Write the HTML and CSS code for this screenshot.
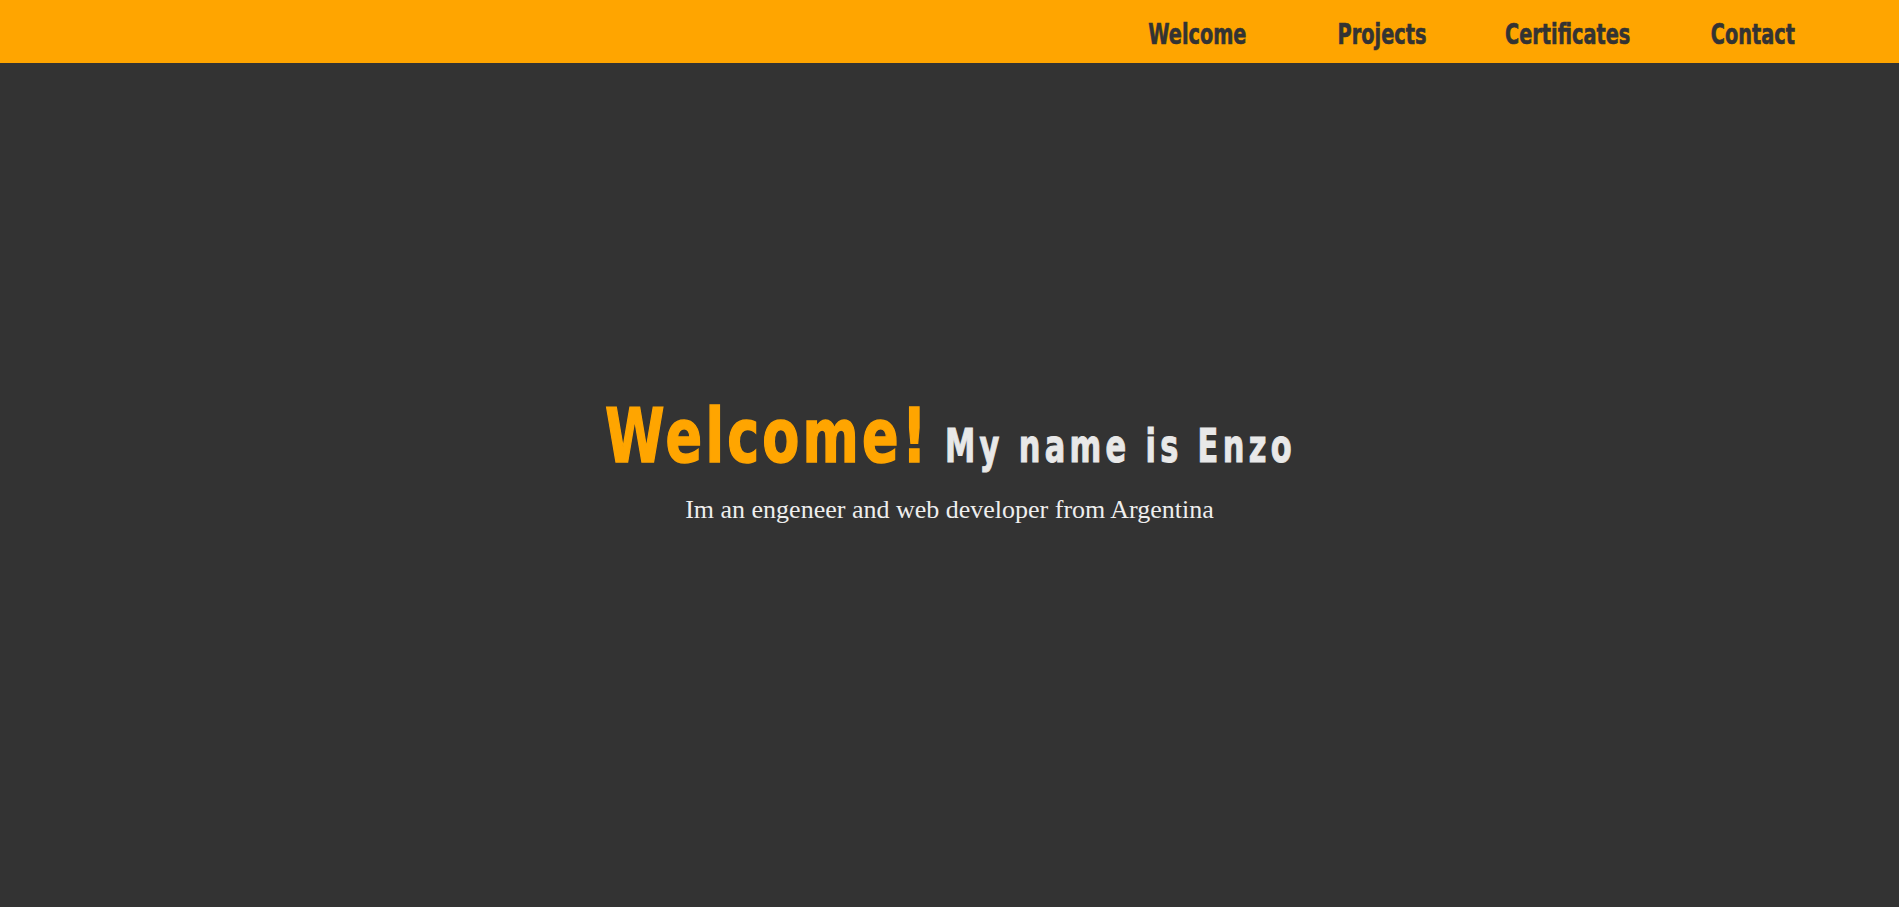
FILE: index.html
```html
<!DOCTYPE html>
<html lang="en">
<head>
<meta charset="utf-8">
<title>Enzo</title>
<link rel="stylesheet" href="styles.css">
</head>
<body>
<header class="topbar">
  <nav class="nav">
    <a class="nav-link" href="#welcome"><span class="nav-text">Welcome</span></a>
    <a class="nav-link" href="#projects"><span class="nav-text">Projects</span></a>
    <a class="nav-link" href="#certificates"><span class="nav-text">Certificates</span></a>
    <a class="nav-link" href="#contact"><span class="nav-text">Contact</span></a>
  </nav>
</header>
<main class="hero" id="welcome">
  <h1 class="hero-title">
    <span class="hero-welcome">Welcome!</span>
    <span class="hero-name">My name is Enzo</span>
  </h1>
  <p class="hero-sub">Im an engeneer and web developer from Argentina</p>
</main>
</body>
</html>
```
FILE: styles.css
```css
html, body {
  margin: 0;
  padding: 0;
}
body {
  background: #333333;
  min-height: 100vh;
  font-family: "Liberation Serif", serif;
}
.topbar {
  height: 63px;
  background: #ffa500;
}
.nav {
  display: flex;
  justify-content: flex-end;
  padding-right: 54px;
}
.nav-link {
  width: 185px;
  text-align: center;
  padding-top: 6px;
  line-height: 57px;
  font-family: "DejaVu Sans Condensed", "DejaVu Sans", sans-serif;
  font-weight: bold;
  font-size: 29px;
  color: #333333;
  text-decoration: none;
}
.nav-text {
  display: inline-block;
  transform: scaleX(0.74);
  -webkit-text-stroke: 0.6px #333333;
}
.hero {
  padding-top: 333px;
  text-align: center;
}
.hero-title {
  margin: 0;
  display: flex;
  justify-content: center;
  align-items: baseline;
  gap: 16px;
  font-family: "DejaVu Sans Condensed", "DejaVu Sans", sans-serif;
  font-weight: bold;
}
.hero-welcome,
.hero-name {
  display: inline-block;
  white-space: nowrap;
  text-align: left;
  transform-origin: left center;
}
.hero-welcome {
  width: 324px;
  font-size: 75px;
  line-height: 80px;
  letter-spacing: 4px;
  color: #ffa500;
  transform: scaleX(0.8);
  -webkit-text-stroke: 1.5px #ffa500;
}
.hero-name {
  width: 349px;
  font-size: 47px;
  line-height: 50px;
  letter-spacing: 6px;
  color: #e8e8e8;
  transform: scaleX(0.72);
  -webkit-text-stroke: 1px #e8e8e8;
}
.hero-sub {
  margin: 19px 0 0;
  font-size: 26px;
  line-height: 30px;
  color: #eeeeee;
}
```
